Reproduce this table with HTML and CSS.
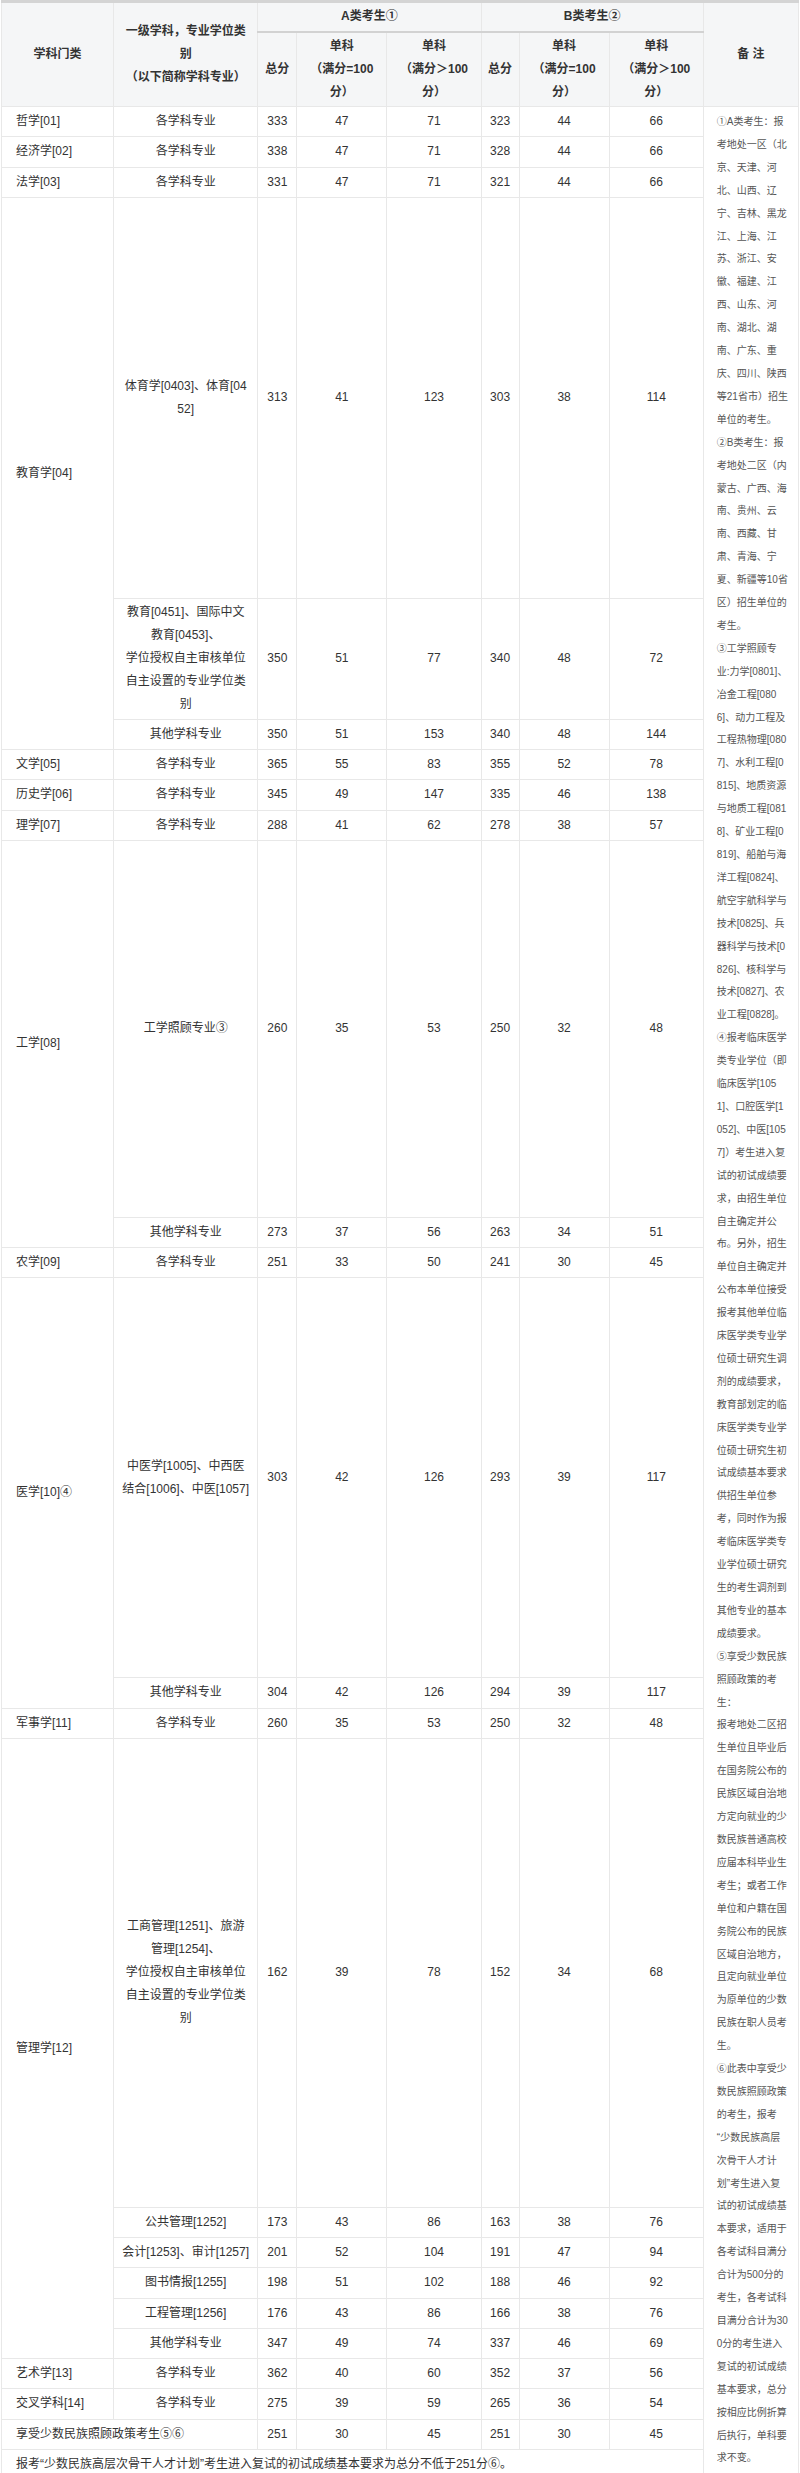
FILE: index.html
```html
<!DOCTYPE html>
<html lang="zh-CN">
<head>
<meta charset="utf-8">
<title>复试基本分数线</title>
<link rel="stylesheet" href="styles.css">
</head>
<body>
<div class="page">
<table class="score-table">
  <colgroup>
    <col class="c-cat"><col class="c-major"><col class="c-total"><col class="c-s100"><col class="c-sbig"><col class="c-total-b"><col class="c-s100"><col class="c-sbig"><col class="c-note">
  </colgroup>
  <thead>
    <tr class="hr1">
      <th rowspan="2">学科门类</th>
      <th rowspan="2">一级学科，专业学位类<br>别<br>（以下简称学科专业）</th>
      <th colspan="3" class="group">A类考生①</th>
      <th colspan="3" class="group">B类考生②</th>
      <th rowspan="2">备 注</th>
    </tr>
    <tr class="hr2">
      <th>总分</th>
      <th>单科<br>（满分=100<br>分）</th>
      <th>单科<br>（满分＞100<br>分）</th>
      <th>总分</th>
      <th>单科<br>（满分=100<br>分）</th>
      <th>单科<br>（满分＞100<br>分）</th>
    </tr>
  </thead>
  <tbody>
    <tr class="r">
      <td class="cat">哲学[01]</td><td>各学科专业</td><td>333</td><td>47</td><td>71</td><td>323</td><td>44</td><td>66</td>
      <td rowspan="25" class="note">①A类考生：报<br>考地处一区（北<br>京、天津、河<br>北、山西、辽<br>宁、吉林、黑龙<br>江、上海、江<br>苏、浙江、安<br>徽、福建、江<br>西、山东、河<br>南、湖北、湖<br>南、广东、重<br>庆、四川、陕西<br>等21省市）招生<br>单位的考生。<br>②B类考生：报<br>考地处二区（内<br>蒙古、广西、海<br>南、贵州、云<br>南、西藏、甘<br>肃、青海、宁<br>夏、新疆等10省<br>区）招生单位的<br>考生。<br>③工学照顾专<br>业:力学[0801]、<br>冶金工程[080<br>6]、动力工程及<br>工程热物理[080<br>7]、水利工程[0<br>815]、地质资源<br>与地质工程[081<br>8]、矿业工程[0<br>819]、船舶与海<br>洋工程[0824]、<br>航空宇航科学与<br>技术[0825]、兵<br>器科学与技术[0<br>826]、核科学与<br>技术[0827]、农<br>业工程[0828]。<br>④报考临床医学<br>类专业学位（即<br>临床医学[105<br>1]、口腔医学[1<br>052]、中医[105<br>7]）考生进入复<br>试的初试成绩要<br>求，由招生单位<br>自主确定并公<br>布。另外，招生<br>单位自主确定并<br>公布本单位接受<br>报考其他单位临<br>床医学类专业学<br>位硕士研究生调<br>剂的成绩要求，<br>教育部划定的临<br>床医学类专业学<br>位硕士研究生初<br>试成绩基本要求<br>供招生单位参<br>考，同时作为报<br>考临床医学类专<br>业学位硕士研究<br>生的考生调剂到<br>其他专业的基本<br>成绩要求。<br>⑤享受少数民族<br>照顾政策的考<br>生：<br>报考地处二区招<br>生单位且毕业后<br>在国务院公布的<br>民族区域自治地<br>方定向就业的少<br>数民族普通高校<br>应届本科毕业生<br>考生；或者工作<br>单位和户籍在国<br>务院公布的民族<br>区域自治地方，<br>且定向就业单位<br>为原单位的少数<br>民族在职人员考<br>生。<br>⑥此表中享受少<br>数民族照顾政策<br>的考生，报考<br>“少数民族高层<br>次骨干人才计<br>划”考生进入复<br>试的初试成绩基<br>本要求，适用于<br>各考试科目满分<br>合计为500分的<br>考生，各考试科<br>目满分合计为30<br>0分的考生进入<br>复试的初试成绩<br>基本要求，总分<br>按相应比例折算<br>后执行，单科要<br>求不变。</td>
    </tr>
    <tr class="r"><td class="cat">经济学[02]</td><td>各学科专业</td><td>338</td><td>47</td><td>71</td><td>328</td><td>44</td><td>66</td></tr>
    <tr class="r"><td class="cat">法学[03]</td><td>各学科专业</td><td>331</td><td>47</td><td>71</td><td>321</td><td>44</td><td>66</td></tr>
    <tr class="r-sport"><td class="cat" rowspan="3">教育学[04]</td><td>体育学[0403]、体育[04<br>52]</td><td>313</td><td>41</td><td>123</td><td>303</td><td>38</td><td>114</td></tr>
    <tr class="r-edu"><td>教育[0451]、国际中文<br>教育[0453]、<br>学位授权自主审核单位<br>自主设置的专业学位类<br>别</td><td>350</td><td>51</td><td>77</td><td>340</td><td>48</td><td>72</td></tr>
    <tr class="r"><td>其他学科专业</td><td>350</td><td>51</td><td>153</td><td>340</td><td>48</td><td>144</td></tr>
    <tr class="r"><td class="cat">文学[05]</td><td>各学科专业</td><td>365</td><td>55</td><td>83</td><td>355</td><td>52</td><td>78</td></tr>
    <tr class="r"><td class="cat">历史学[06]</td><td>各学科专业</td><td>345</td><td>49</td><td>147</td><td>335</td><td>46</td><td>138</td></tr>
    <tr class="r"><td class="cat">理学[07]</td><td>各学科专业</td><td>288</td><td>41</td><td>62</td><td>278</td><td>38</td><td>57</td></tr>
    <tr class="r-eng"><td class="cat" rowspan="2">工学[08]</td><td>工学照顾专业③</td><td>260</td><td>35</td><td>53</td><td>250</td><td>32</td><td>48</td></tr>
    <tr class="r"><td>其他学科专业</td><td>273</td><td>37</td><td>56</td><td>263</td><td>34</td><td>51</td></tr>
    <tr class="r"><td class="cat">农学[09]</td><td>各学科专业</td><td>251</td><td>33</td><td>50</td><td>241</td><td>30</td><td>45</td></tr>
    <tr class="r-med"><td class="cat" rowspan="2">医学[10]④</td><td>中医学[1005]、中西医<br>结合[1006]、中医[1057]</td><td>303</td><td>42</td><td>126</td><td>293</td><td>39</td><td>117</td></tr>
    <tr class="r"><td>其他学科专业</td><td>304</td><td>42</td><td>126</td><td>294</td><td>39</td><td>117</td></tr>
    <tr class="r"><td class="cat">军事学[11]</td><td>各学科专业</td><td>260</td><td>35</td><td>53</td><td>250</td><td>32</td><td>48</td></tr>
    <tr class="r-mgmt"><td class="cat" rowspan="6">管理学[12]</td><td>工商管理[1251]、旅游<br>管理[1254]、<br>学位授权自主审核单位<br>自主设置的专业学位类<br>别</td><td>162</td><td>39</td><td>78</td><td>152</td><td>34</td><td>68</td></tr>
    <tr class="r"><td>公共管理[1252]</td><td>173</td><td>43</td><td>86</td><td>163</td><td>38</td><td>76</td></tr>
    <tr class="r"><td>会计[1253]、审计[1257]</td><td>201</td><td>52</td><td>104</td><td>191</td><td>47</td><td>94</td></tr>
    <tr class="r"><td>图书情报[1255]</td><td>198</td><td>51</td><td>102</td><td>188</td><td>46</td><td>92</td></tr>
    <tr class="r"><td>工程管理[1256]</td><td>176</td><td>43</td><td>86</td><td>166</td><td>38</td><td>76</td></tr>
    <tr class="r"><td>其他学科专业</td><td>347</td><td>49</td><td>74</td><td>337</td><td>46</td><td>69</td></tr>
    <tr class="r"><td class="cat">艺术学[13]</td><td>各学科专业</td><td>362</td><td>40</td><td>60</td><td>352</td><td>37</td><td>56</td></tr>
    <tr class="r"><td class="cat">交叉学科[14]</td><td>各学科专业</td><td>275</td><td>39</td><td>59</td><td>265</td><td>36</td><td>54</td></tr>
    <tr class="r"><td class="cat" colspan="2">享受少数民族照顾政策考生⑤⑥</td><td>251</td><td>30</td><td>45</td><td>251</td><td>30</td><td>45</td></tr>
    <tr class="r"><td class="cat" colspan="8">报考“少数民族高层次骨干人才计划”考生进入复试的初试成绩基本要求为总分不低于251分⑥。</td></tr>
  </tbody>
</table>
</div>
</body>
</html>
```
FILE: styles.css
```css
* { box-sizing: border-box; }
html, body { margin: 0; padding: 0; background: #fff; }
body {
  font-family: "Liberation Sans", "Noto Sans CJK SC", sans-serif;
  font-size: 12px;
  color: #333;
}
.page { padding-left: 1px; }

.score-table {
  width: 798px;
  table-layout: fixed;
  border-collapse: collapse;
  border-top: 3px solid #d4d4d4;
}
.c-cat { width: 112px; }
.c-major { width: 144px; }
.c-total { width: 39px; }
.c-s100 { width: 90px; }
.c-sbig { width: 94px; }
.c-total-b { width: 38px; }
.c-note { width: 95px; }

.score-table th,
.score-table td {
  border: 1px solid #e8e8e8;
  padding: 0 2px;
  line-height: 23px;
  text-align: center;
  vertical-align: middle;
  white-space: nowrap;
  overflow: hidden;
}
.score-table th {
  background: #f5f6f7;
  font-weight: bold;
  color: #333;
}
.score-table th.group { border-bottom: 2px solid #d2d2d2; }
.hr1 { height: 30px; }
.hr2 { height: 75px; }

.score-table td.cat {
  text-align: left;
  padding-left: 14px;
}
.score-table td.note {
  vertical-align: top;
  text-align: left;
  padding: 4px 4px 0 13px;
  font-size: 10px;
  line-height: 22.9px;
  color: #555;
}

.r { height: 30.25px; }
.r-sport { height: 401px; }
.r-edu { height: 121px; }
.r-eng { height: 377px; }
.r-med { height: 400px; }
.r-mgmt { height: 469px; }
```
